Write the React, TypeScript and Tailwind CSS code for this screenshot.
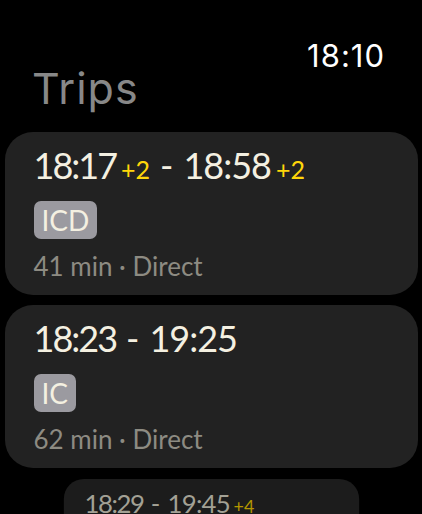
import React from "react";

type Trip = {
  dep: string;
  depDelay?: string;
  arr: string;
  arrDelay?: string;
  train: string;
  info: string;
};

const trips: Trip[] = [
  { dep: "18:17", depDelay: "+2", arr: "18:58", arrDelay: "+2", train: "ICD", info: "41 min · Direct" },
  { dep: "18:23", arr: "19:25", train: "IC", info: "62 min · Direct" },
  { dep: "18:29", arr: "19:45", arrDelay: "+4", train: "IC", info: "76 min · Direct" },
];

function TripCard({ trip, dim }: { trip: Trip; dim?: boolean }) {
  const main = dim ? "text-[#a3a195]" : "text-[#f4f0e1]";
  const delay = dim ? "text-[#b39600]" : "text-[#ffd60a]";
  return (
    <div
      className={`w-[413px] shrink-0 rounded-[28px] pl-[29px] pr-4 pt-[11px] pb-[13px] flex flex-col ${
        dim ? "bg-[#1c1c1c]" : "bg-[#222222]"
      }`}
    >
      <div className={`flex h-[44px] items-baseline text-[36px] leading-[44px] ${main}`}>
        <span className="tracking-[-2px]">{trip.dep}</span>
        {trip.depDelay && (
          <span className={`ml-[5px] text-[25px] leading-none ${delay}`}>{trip.depDelay}</span>
        )}
        <span className="mx-[10px]">-</span>
        <span className="tracking-[-1px]">{trip.arr}</span>
        {trip.arrDelay && (
          <span className={`ml-[5px] text-[25px] leading-none ${delay}`}>{trip.arrDelay}</span>
        )}
      </div>
      <div className="mt-[14px] flex">
        <span className="h-[38px] rounded-[7px] bg-[#9b9aa0] px-[8px] text-[28px] leading-[38px] text-[#f4f0e1]">
          {trip.train}
        </span>
      </div>
      <div className="mt-[11px] text-[26px] leading-[32px] text-[#8d8b82]">{trip.info}</div>
    </div>
  );
}

export default function App() {
  return (
    <div
      className="w-[422px] h-[514px] overflow-hidden bg-black"
      style={{ fontFamily: "Lato, 'Open Sans', sans-serif" }}
    >
      <div style={{ fontFamily: "Inter, 'Liberation Sans', sans-serif" }}>
        <div className="flex justify-end pt-[38px] pr-[37px]">
          <span className="text-[31px] leading-[36px] tracking-[1px] text-white">18:10</span>
        </div>
        <div className="-mt-[10px] pl-[32px] text-[43px] leading-[48px] tracking-[1px] text-[#888888]">Trips</div>
      </div>
      <div className="mt-[20px] flex flex-col items-center gap-[10px]">
        <TripCard trip={trips[0]} />
        <TripCard trip={trips[1]} />
        <div className="mt-px origin-top scale-[0.715]">
          <TripCard trip={trips[2]} dim />
        </div>
      </div>
    </div>
  );
}
